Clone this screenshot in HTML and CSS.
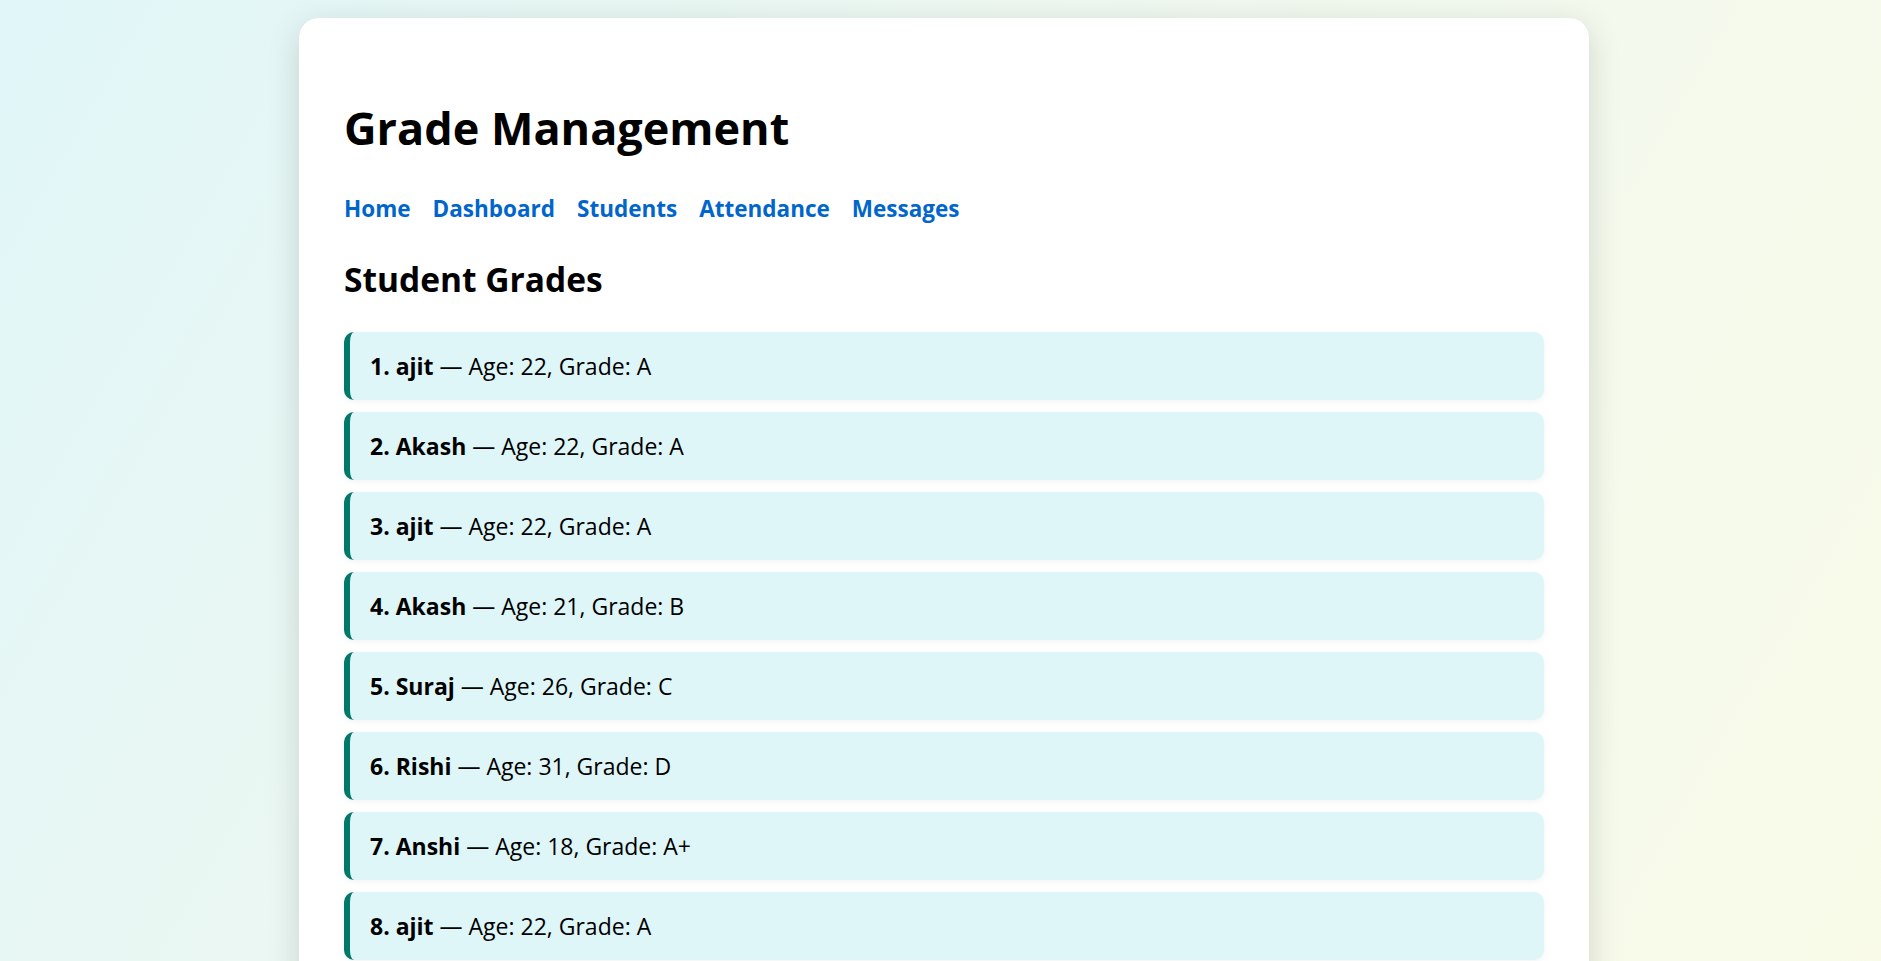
FILE: index.html
```html
<!DOCTYPE html>
<html lang="en">
<head>
<meta charset="utf-8">
<title>Grade Management</title>
<link rel="stylesheet" href="styles.css">
</head>
<body>
<main class="card">
  <h1 class="title">Grade Management</h1>
  <nav class="nav">
    <a href="#">Home</a>
    <a href="#">Dashboard</a>
    <a href="#">Students</a>
    <a href="#">Attendance</a>
    <a href="#">Messages</a>
  </nav>
  <h2 class="subtitle">Student Grades</h2>
  <ul class="grades">
    <li class="grade"><strong>1. ajit</strong> — Age: 22, Grade: A</li>
    <li class="grade"><strong>2. Akash</strong> — Age: 22, Grade: A</li>
    <li class="grade"><strong>3. ajit</strong> — Age: 22, Grade: A</li>
    <li class="grade"><strong>4. Akash</strong> — Age: 21, Grade: B</li>
    <li class="grade"><strong>5. Suraj</strong> — Age: 26, Grade: C</li>
    <li class="grade"><strong>6. Rishi</strong> — Age: 31, Grade: D</li>
    <li class="grade"><strong>7. Anshi</strong> — Age: 18, Grade: A+</li>
    <li class="grade"><strong>8. ajit</strong> — Age: 22, Grade: A</li>
  </ul>
</main>
</body>
</html>
```
FILE: styles.css
```css
html, body {
  margin: 0;
  padding: 0;
}
body {
  min-height: 100vh;
  background: linear-gradient(120deg, #e0f6f8 0%, #f0f8ef 50%, #f9fbe8 100%);
  font-family: "Open Sans", "Noto Sans", sans-serif;
  color: #000;
  padding-top: 18px;
  box-sizing: border-box;
}
.card {
  width: 1200px;
  margin: 0 0 0 299px;
  padding: 44px 45px 45px;
  background: #fff;
  border-radius: 20px;
  box-shadow: 0 8px 32px rgba(0, 0, 0, 0.15);
}
.title {
  font-size: 45px;
  font-weight: 700;
  margin: 36px 0 34px;
  line-height: 1.35;
}
.nav {
  display: flex;
  gap: 22px;
  margin-bottom: 32px;
}
.nav a {
  color: #0066cc;
  font-weight: 700;
  font-size: 22.5px;
  line-height: 31px;
  text-decoration: none;
}
.subtitle {
  font-size: 33.5px;
  font-weight: 700;
  margin: 0 0 30px;
  line-height: 46px;
}
.grades {
  list-style: none;
  margin: 0;
  padding: 0;
  display: flex;
  flex-direction: column;
  gap: 12px;
}
.grade {
  background: #dff6f8;
  border-left: 6px solid #00796b;
  border-radius: 10px;
  padding: 19px 20px;
  font-size: 23px;
  line-height: 30px;
  box-shadow: 0 2px 6px rgba(0, 0, 0, 0.05);
}
.grade strong {
  font-weight: 700;
}
```
